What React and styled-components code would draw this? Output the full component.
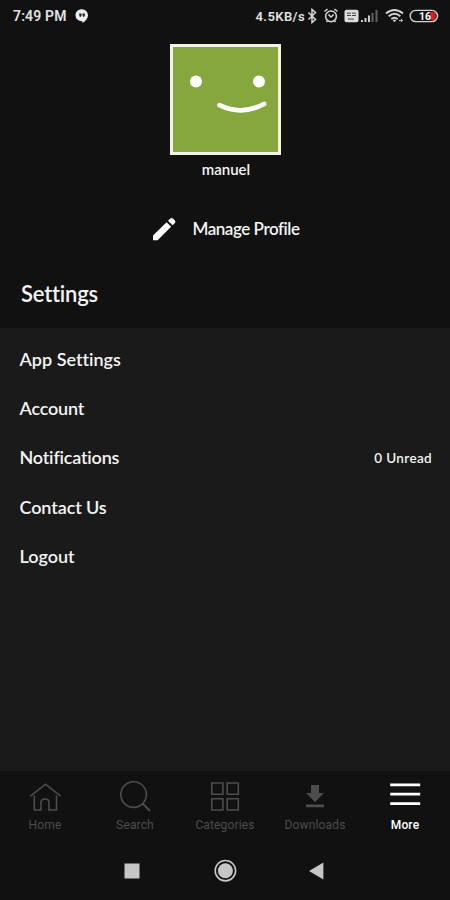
import React from 'react';
import styled, { createGlobalStyle } from 'styled-components';

const GlobalStyle = createGlobalStyle`
  * { box-sizing: border-box; }
  body { margin: 0; background: #111; }
`;

const Screen = styled.main`
  width: 450px;
  height: 900px;
  display: flex;
  flex-direction: column;
  overflow: hidden;
  background: #111;
  color: #f4f4f4;
  font-family: Lato, 'Liberation Sans', sans-serif;
`;

const StatusBar = styled.header`
  height: 32px;
  display: flex;
  align-items: center;
  padding: 0 11px 0 13px;
  font-family: Roboto, sans-serif;
  font-weight: 600;
  color: #e2e2e2;
  svg { display: block; flex: none; }
`;

const Clock = styled.span`
  width: 62px;
  font-size: 14px;
  letter-spacing: 0.15px;
  white-space: nowrap;
`;

const Speed = styled.span`
  margin-left: auto;
  font-size: 13px;
  letter-spacing: 0.4px;
`;

const Profile = styled.section`
  height: 228px;
  padding-top: 12px;
  display: flex;
  flex-direction: column;
  align-items: center;
`;

const Avatar = styled.div`
  width: 111px;
  height: 111px;
  border: 3px solid #f0f4e8;
  background: #85a73d;
  svg { display: block; }
`;

const Label = styled.span`
  font-size: ${(p) => p.$size}px;
  font-weight: ${(p) => p.$weight || 600};
  letter-spacing: ${(p) => p.$track || 0}px;
  font-variant-ligatures: none;
  line-height: 1.2;
  white-space: nowrap;
`;

const Name = styled.div`
  height: 30px;
  padding: 5px 0 0 2px;
  line-height: 18px;
`;

const ManageButton = styled.button`
  margin-top: 29px;
  height: 30px;
  padding: 0 0 0 2px;
  border: 0;
  background: none;
  color: inherit;
  font-family: inherit;
  display: flex;
  align-items: center;
  gap: 15px;
  svg { display: block; }
`;

const SectionTitle = styled.h1`
  height: 68px;
  margin: 0;
  padding: 16px 21px 0;
  line-height: 28px;
`;

const Menu = styled.ul`
  flex: 1;
  margin: 0;
  padding: 7px 18px 0 19.5px;
  list-style: none;
  background: #1a1a1a;
`;

const MenuRow = styled.li`
  height: 49.3px;
  display: flex;
  align-items: center;
  justify-content: space-between;
`;

const TabBar = styled.nav`
  height: 73px;
  display: grid;
  grid-template-columns: repeat(5, 1fr);
`;

const Tab = styled.div`
  display: flex;
  flex-direction: column;
  align-items: center;
  padding-top: 8px;
  color: ${(p) => (p.$active ? '#fff' : '#4d4d4d')};
  font: ${(p) => (p.$active ? 500 : 400)} 12px/16px Roboto, sans-serif;
  letter-spacing: ${(p) => p.$track || 0}px;
  svg { display: block; margin-bottom: 2px; }
`;

const SystemNav = styled.footer`
  height: 56px;
  padding: 14px 121px 0 118px;
  display: flex;
  justify-content: space-between;
  svg { display: block; }
`;

const items = [
  { text: 'App Settings', track: 0 },
  { text: 'Account', track: -0.2 },
  { text: 'Notifications', track: -0.2 },
  { text: 'Contact Us', track: -0.1 },
  { text: 'Logout', track: 0 },
];

const ChatIcon = () => (
  <svg width="14" height="16" viewBox="0 0 14 16">
    <path d="M7 1.2a6 6 0 0 1 6 6c0 3.2-2.3 5.8-5.6 7.8v-1.9A6 6 0 1 1 7 1.2Z" fill="#eee" />
    <path d="M4.2 5.4h2.3v2.3L5.4 9H4.7V7.7h-.5Zm3.3 0h2.3v2.3L8.7 9H8V7.7h-.5Z" fill="#222" />
  </svg>
);

const StatusIcons = () => (
  <svg width="134" height="20" viewBox="305 6 134 20" fill="none" stroke="#d5d5d5">
    <path d="m308.5 12.5 7 7-3.5 3V9.5l3.5 3-7 7" strokeWidth="1.5" />
    <g strokeWidth="1.5">
      <circle cx="331" cy="16.3" r="5.4" />
      <path d="m324.5 11.5 3-2.5m10 2.5-3-2.5m-6.2 5.5 2.7 2.5 2.7-2.5M326.5 22l1-1m8 1-1-1" />
    </g>
    <rect x="344.5" y="9.8" width="14" height="12.5" rx="2" fill="#ddd" stroke="none" />
    <path d="M347 13.2h4m-4 2.3h4m1-2.3h4m-4 2.3h4m-8 3.5h6" stroke="#404040" />
    <g fill="#ccc" stroke="none">
      <path d="M361 20h2v2h-2zm3.5-2h2v4h-2zm3.5-2.5h2V22h-2z" />
      <path d="M371.5 13h2v9h-2zM375.5 10h2v12h-2z" fill="#606060" />
    </g>
    <g strokeWidth="1.9">
      <path d="M386 13.6q8.5-7 17 0M388.7 16.3q5.8-4.9 11.6 0M391.3 19q3.2-2.7 6.4 0" />
      <path d="m393 20 1.5 2 1.5-2Z" fill="#ddd" strokeWidth=".5" />
      <path d="M399 20.5h3.5m-1.5-1.7 1.5 1.7-1.5 1.7" strokeWidth=".9" />
    </g>
    <path d="M430 12h3.2a2.5 2.5 0 0 1 2.5 2.5v3.2a2.5 2.5 0 0 1-2.5 2.5H430Z" fill="#d51e25" stroke="none" />
    <rect x="410.2" y="10.4" width="27.3" height="11.2" rx="5.6" strokeWidth="1.4" />
    <text x="419" y="20" fill="#fff" stroke="none" fontFamily="Roboto" fontWeight="700" fontSize="10.5">16</text>
  </svg>
);

const TabIcon = ({ kind }) => (
  <svg width="34" height="36" viewBox="0 0 34 36" fill="none" stroke="currentColor" strokeWidth="1.6">
    {kind === 'Home' && <path d="m2.3 17.2 15.2-12 15.2 12M6.3 16.5V31H13v-7.5q0-3.5 4-3.5t4 3.5V31h7.5V16.5" />}
    {kind === 'Search' && <><circle cx="15.6" cy="15.6" r="12.8" /><path d="m24.4 24.4 7.6 7.6" strokeWidth="2" /></>}
    {kind === 'Categories' && <path d="M3.8 4h11.1v11.3H3.8ZM19.2 4h11.1v11.3H19.2ZM3.8 19.7h11.1V31H3.8ZM19.2 19.7h11.1V31H19.2Z" />}
    {kind === 'Downloads' && <path d="M13 6h8v8h5l-9 9-9-9h5ZM8 25.5h18v2.7H8Z" fill="currentColor" stroke="none" />}
    {kind === 'More' && <path d="M2.2 5.8h30M2.2 15.2h30M2.2 24.6h30" strokeWidth="2.7" />}
  </svg>
);

export default function App() {
  return (
    <>
      <GlobalStyle />
      <Screen>
        <StatusBar>
          <Clock>7:49 PM</Clock>
          <ChatIcon />
          <Speed>4.5KB/s</Speed>
          <StatusIcons />
        </StatusBar>
        <Profile>
          <Avatar>
            <svg width="105" height="105" viewBox="173 47 105 105">
              <circle cx="196" cy="81.5" r="6" fill="#fff" />
              <circle cx="259" cy="81.5" r="6" fill="#fff" />
              <path d="M219.5 105.2Q241.5 116 264 104" stroke="#fff" strokeWidth="4.8" strokeLinecap="round" fill="none" />
            </svg>
          </Avatar>
          <Name><Label $size={15}>manuel</Label></Name>
          <ManageButton>
            <svg width="25" height="26" viewBox="0 0 25 26" fill="#fff">
              <path d="M1 19.4 14.6 6.2l4.5 4.5L5.6 24.3H1ZM16 4.8l2.4-2.4q1.3-1 2.5.1l2 2q1.1 1.3 0 2.5l-2.3 2.3Z" />
            </svg>
            <Label $size={17} $track={-0.45}>Manage Profile</Label>
          </ManageButton>
        </Profile>
        <SectionTitle><Label $size={22} $track={-0.2}>Settings</Label></SectionTitle>
        <Menu>
          {items.map((item) => (
            <MenuRow key={item.text}>
              <Label $size={18} $track={item.track}>{item.text}</Label>
              {item.text === 'Notifications' && <Label $size={13.5} $track={0.35}>0 Unread</Label>}
            </MenuRow>
          ))}
        </Menu>
        <TabBar>
          {['Home', 'Search', 'Categories', 'Downloads', 'More'].map((name) => (
            <Tab key={name} $active={name === 'More'} $track={0.15}>
              <TabIcon kind={name} />
              {name}
            </Tab>
          ))}
        </TabBar>
        <SystemNav>
          <svg width="28" height="24" viewBox="0 0 28 24"><path d="M6.5 5.5h15v15h-15Z" fill="#c6c6c6" /></svg>
          <svg width="24" height="24" viewBox="0 0 24 24">
            <circle cx="11.4" cy="12.7" r="10.2" fill="none" stroke="#c6c6c6" strokeWidth="1.6" />
            <circle cx="11.4" cy="12.7" r="7.5" fill="#c6c6c6" />
          </svg>
          <svg width="24" height="24" viewBox="0 0 24 24"><path d="M4 12.9 18.4 4.5v17Z" fill="#c6c6c6" /></svg>
        </SystemNav>
      </Screen>
    </>
  );
}
